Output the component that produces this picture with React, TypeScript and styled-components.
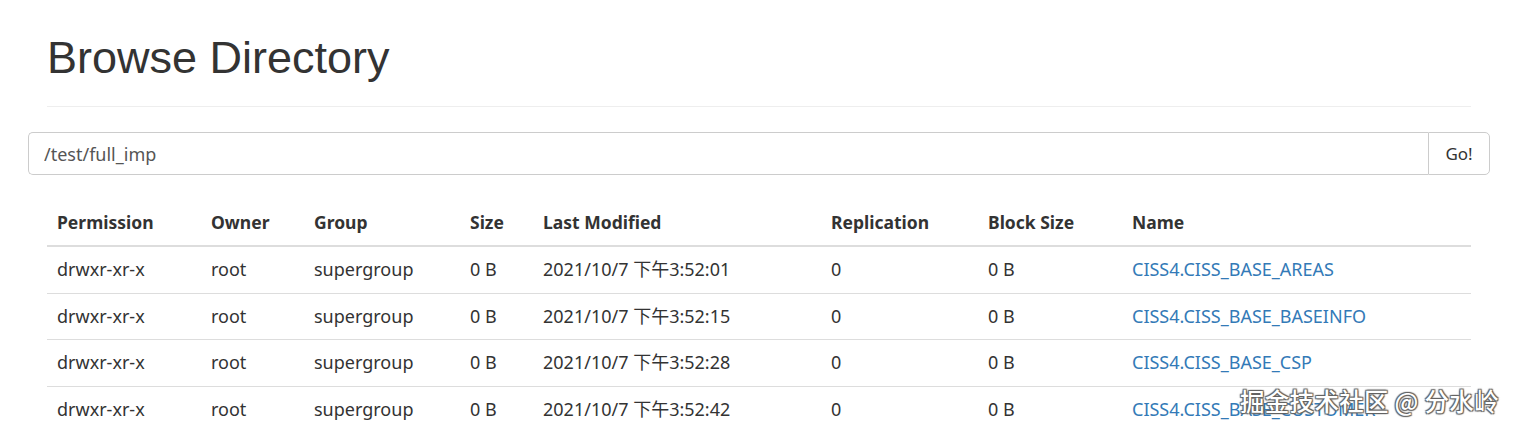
import React from "react";
import styled, { createGlobalStyle } from "styled-components";

const Global = createGlobalStyle`
  html, body { margin: 0; padding: 0; background: #fff; }
  body { font-family: "Noto Sans", "Noto Sans CJK SC", sans-serif; color: #333; overflow: hidden; }
`;

const Page = styled.div`
  position: relative;
  width: 1517px;
  height: 429px;
  overflow: hidden;
`;

const Header = styled.div`
  margin: 0 46px 0 47px;
  padding-top: 30px;
  padding-bottom: 20px;
  border-bottom: 1px solid #eee;
`;

const Title = styled.h1`
  margin: 0;
  font-family: "Liberation Sans", Arial, sans-serif;
  font-weight: 400;
  font-size: 45px;
  line-height: 56px;
  color: #333;
`;

const SearchForm = styled.form`
  display: flex;
  margin: 25px 27px 0 28px;
  height: 43px;
`;

const PathInput = styled.input`
  flex: 1;
  height: 43px;
  box-sizing: border-box;
  border: 1px solid #ccc;
  border-right: none;
  border-radius: 5px 0 0 5px;
  padding: 0 15px;
  font-family: "Noto Sans", sans-serif;
  font-size: 18px;
  color: #555;
  outline: none;
`;

const GoButton = styled.button`
  width: 62px;
  height: 43px;
  box-sizing: border-box;
  border: 1px solid #ccc;
  border-radius: 0 5px 5px 0;
  background: #fff;
  font-family: "Noto Sans", sans-serif;
  font-size: 17px;
  color: #333;
  padding: 0;
`;

const Table = styled.table`
  margin: 25px 46px 0 47px;
  width: 1424px;
  border-collapse: collapse;
  table-layout: fixed;
  font-size: 18px;
`;

const Th = styled.th`
  text-align: left;
  font-weight: 700;
  font-size: 17.5px;
  padding: 10px;
  line-height: 25px;
  border-bottom: 2px solid #ddd;
  white-space: nowrap;
`;

const Td = styled.td<{ $first?: boolean }>`
  padding: 10px;
  line-height: 25.5px;
  border-top: ${(p) => (p.$first ? "none" : "1px solid #ddd")};
  white-space: nowrap;
  font-family: "Noto Sans", "Noto Sans CJK SC", sans-serif;
`;

const NameLink = styled.a`
  color: #337ab7;
  text-decoration: none;
`;

const Watermark = styled.div`
  position: absolute;
  left: 1240px;
  top: 383px;
  font-family: "Noto Sans CJK SC", sans-serif;
  font-size: 24.5px;
  font-weight: 500;
  color: #fff;
  letter-spacing: 0.3px;
  text-shadow: 0 0 1px #444, 1px 1px 1px #666, -1px -1px 1px #666, 1px -1px 1px #666, -1px 1px 1px #666;
  white-space: nowrap;
`;

const widths = [154, 103, 156, 73, 288, 157, 144, 349];
const heads = ["Permission", "Owner", "Group", "Size", "Last Modified", "Replication", "Block Size", "Name"];

const rows = [
  ["2021/10/7 下午3:52:01", "CISS4.CISS_BASE_AREAS"],
  ["2021/10/7 下午3:52:15", "CISS4.CISS_BASE_BASEINFO"],
  ["2021/10/7 下午3:52:28", "CISS4.CISS_BASE_CSP"],
  ["2021/10/7 下午3:52:42", "CISS4.CISS_BASE_CUSTOMER"],
];

export default function App() {
  return (
    <Page>
      <Global />
      <Header>
        <Title>Browse Directory</Title>
      </Header>
      <SearchForm onSubmit={(e) => e.preventDefault()}>
        <PathInput defaultValue="/test/full_imp" />
        <GoButton type="submit">Go!</GoButton>
      </SearchForm>
      <Table>
        <colgroup>
          {widths.map((w, i) => (
            <col key={i} style={{ width: w }} />
          ))}
        </colgroup>
        <thead>
          <tr>
            {heads.map((h) => (
              <Th key={h}>{h}</Th>
            ))}
          </tr>
        </thead>
        <tbody>
          {rows.map(([date, name], i) => (
            <tr key={name}>
              <Td $first={i === 0}>drwxr-xr-x</Td>
              <Td $first={i === 0}>root</Td>
              <Td $first={i === 0}>supergroup</Td>
              <Td $first={i === 0}>0 B</Td>
              <Td $first={i === 0}>{date}</Td>
              <Td $first={i === 0}>0</Td>
              <Td $first={i === 0}>0 B</Td>
              <Td $first={i === 0}>
                <NameLink href="#">{name}</NameLink>
              </Td>
            </tr>
          ))}
        </tbody>
      </Table>
      <Watermark>掘金技术社区 @ 分水岭</Watermark>
    </Page>
  );
}
